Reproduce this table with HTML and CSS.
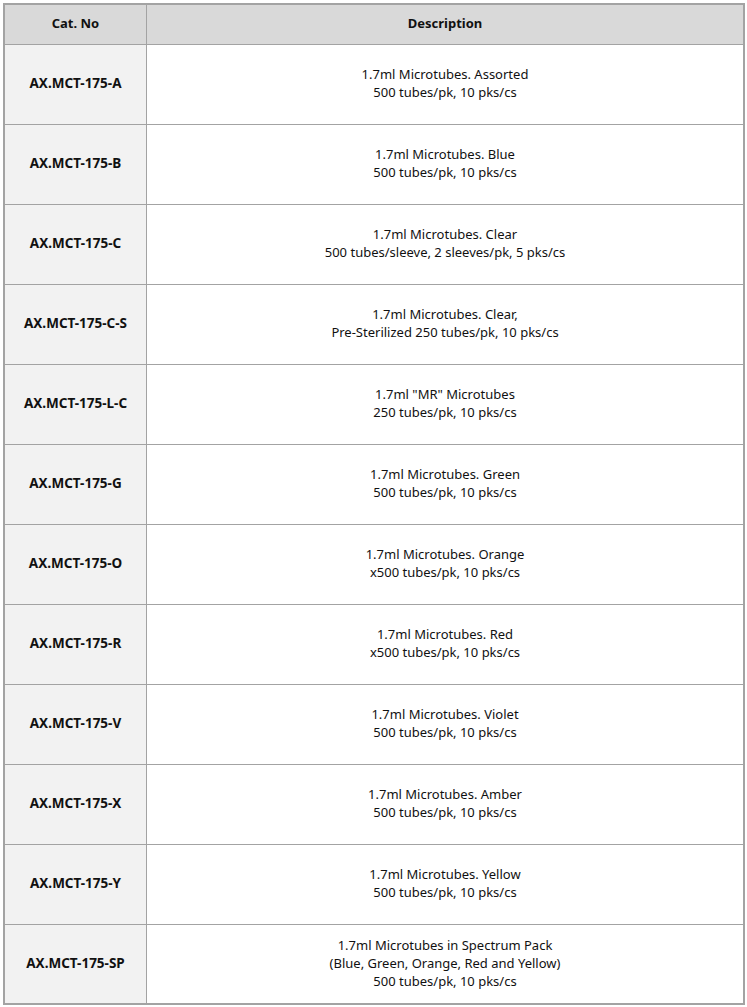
FILE: index.html
```html
<!DOCTYPE html>
<html>
<head>
<meta charset="utf-8">
<link rel="stylesheet" href="styles.css">
</head>
<body>
<table class="products">
  <thead>
    <tr class="head-row"><th class="cat">Cat. No</th><th class="desc">Description</th></tr>
  </thead>
  <tbody>
    <tr><td class="cat">AX.MCT-175-A</td><td class="desc">1.7ml Microtubes. Assorted<br>500 tubes/pk, 10 pks/cs</td></tr>
    <tr><td class="cat">AX.MCT-175-B</td><td class="desc">1.7ml Microtubes. Blue<br>500 tubes/pk, 10 pks/cs</td></tr>
    <tr><td class="cat">AX.MCT-175-C</td><td class="desc">1.7ml Microtubes. Clear<br>500 tubes/sleeve, 2 sleeves/pk, 5 pks/cs</td></tr>
    <tr><td class="cat">AX.MCT-175-C-S</td><td class="desc">1.7ml Microtubes. Clear,<br>Pre-Sterilized 250 tubes/pk, 10 pks/cs</td></tr>
    <tr><td class="cat">AX.MCT-175-L-C</td><td class="desc">1.7ml "MR" Microtubes<br>250 tubes/pk, 10 pks/cs</td></tr>
    <tr><td class="cat">AX.MCT-175-G</td><td class="desc">1.7ml Microtubes. Green<br>500 tubes/pk, 10 pks/cs</td></tr>
    <tr><td class="cat">AX.MCT-175-O</td><td class="desc">1.7ml Microtubes. Orange<br>x500 tubes/pk, 10 pks/cs</td></tr>
    <tr><td class="cat">AX.MCT-175-R</td><td class="desc">1.7ml Microtubes. Red<br>x500 tubes/pk, 10 pks/cs</td></tr>
    <tr><td class="cat">AX.MCT-175-V</td><td class="desc">1.7ml Microtubes. Violet<br>500 tubes/pk, 10 pks/cs</td></tr>
    <tr><td class="cat">AX.MCT-175-X</td><td class="desc">1.7ml Microtubes. Amber<br>500 tubes/pk, 10 pks/cs</td></tr>
    <tr><td class="cat">AX.MCT-175-Y</td><td class="desc">1.7ml Microtubes. Yellow<br>500 tubes/pk, 10 pks/cs</td></tr>
    <tr class="last"><td class="cat">AX.MCT-175-SP</td><td class="desc">1.7ml Microtubes in Spectrum Pack<br>(Blue, Green, Orange, Red and Yellow)<br>500 tubes/pk, 10 pks/cs</td></tr>
  </tbody>
</table>
</body>
</html>
```
FILE: styles.css
```css
html, body {
  margin: 0;
  padding: 0;
  background: #ffffff;
}
body {
  padding: 3px;
  font-family: "Noto Sans", "Noto Sans CJK KR", sans-serif;
  font-size: 13px;
  color: #111;
}
.products {
  border-collapse: separate;
  border-spacing: 0;
  border: 2px solid #a3a3a3;
  width: 742px;
  table-layout: fixed;
}
.products th,
.products td {
  padding: 0 0 4px 0;
  text-align: center;
  vertical-align: middle;
  border-right: 1px solid #a3a3a3;
  border-bottom: 1px solid #a3a3a3;
  line-height: 18px;
  box-sizing: border-box;
}
.products .desc {
  border-right: none;
}
.products .last td {
  border-bottom: none;
  height: 78px;
  padding-bottom: 2px;
}
.products th {
  background: #d9d9d9;
  font-weight: bold;
  height: 40px;
}
.products td {
  height: 80px;
}
.products th.cat,
.products td.cat {
  width: 142px;
}
.products td.cat {
  background: #f2f2f2;
  font-weight: bold;
  font-size: 13.5px;
}
```
